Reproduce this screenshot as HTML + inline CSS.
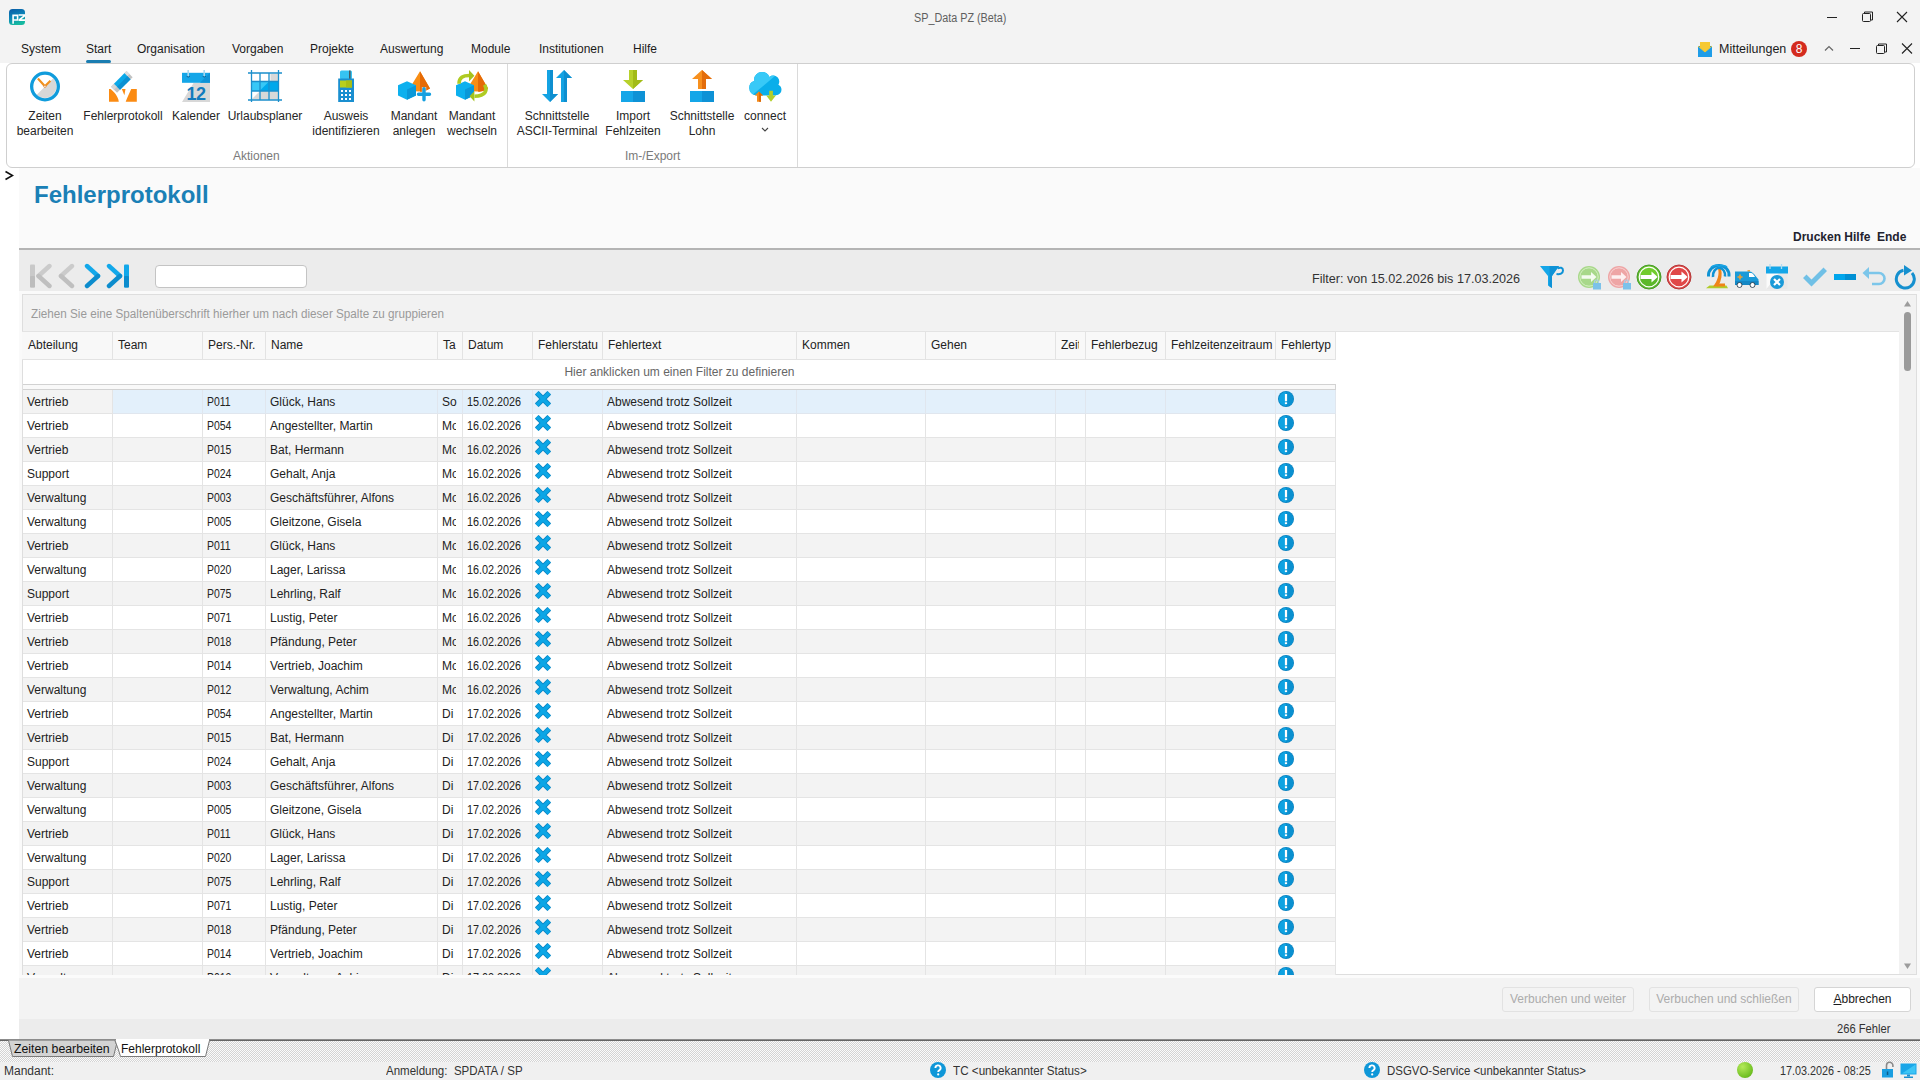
<!DOCTYPE html>
<html><head><meta charset="utf-8">
<style>
*{margin:0;padding:0;box-sizing:border-box}
html,body{width:1920px;height:1080px;overflow:hidden;background:#fff;font-family:"Liberation Sans",sans-serif;font-size:12px;color:#1e1e1e}
.a{position:absolute;white-space:nowrap}
#top{position:absolute;left:0;top:0;width:1920px;height:63px;background:#f3f3f3}
.menu{position:absolute;top:42px;line-height:14px;font-size:12px;color:#1b1b1b}
#ribbon{position:absolute;z-index:2;left:6px;top:63px;width:1909px;height:105px;background:#fff;border:1px solid #cfcfcf;border-radius:6px}
.rb{position:absolute;top:0;text-align:center;line-height:15px;color:#262626}
.rb .ic{position:absolute;top:6px;width:32px;height:32px}
.rb .lb{position:absolute;top:44px;left:-60px;right:-60px;text-align:center;white-space:nowrap}
.gl{position:absolute;top:85px;color:#7a7a7a;line-height:15px}
.sep{position:absolute;top:0;width:1px;height:103px;background:#dadada}

.hdr{position:absolute;left:0;top:37px;width:1314px;height:29px;background:#f8f8f8;border-top:1px solid #e3e3e3;border-bottom:1px solid #e3e3e3}
.hc{position:absolute;top:0;height:27px;border-right:1px solid #e3e3e3;overflow:hidden;padding-left:5px;line-height:27px;color:#222}
.frow{position:absolute;left:1px;top:66px;width:1313px;height:24px;background:#fff;text-align:center;line-height:24px;color:#666}
.fsep{position:absolute;left:1px;top:90px;width:1313px;height:6px;background:#f9f9f9;border:1px solid #d2d2d2;border-left:none}
.row{position:absolute;left:0;width:1314px;height:24px}
.row .c{position:absolute;top:0;height:24px;border-right:1px solid #e4e4e4;border-bottom:1px solid #e4e4e4;padding-left:4px;padding-top:1px;line-height:23px;overflow:hidden;color:#222}
.row.g .c{background:#f3f3f3}
.row.sel .c{background:#e3f0fb;border-color:#e0e6ee}
.row.sel .c.foc{background:#f3f3f3;border-color:#e4e4e4}
.ix,.ii{position:absolute;top:1px}
.ix{left:2px}.ii{left:2px}
.btn{position:absolute;top:987px;height:25px;border:1px solid #e2e2e2;border-radius:3px;background:#f3f3f3;text-align:center;line-height:23px;color:#acacac}
.hatch{background:repeating-conic-gradient(#d4d4d4 0 25%,#fbfbfb 0 50%) 0 0/2px 2px}

.clip{display:inline-block;width:14px;overflow:hidden;vertical-align:top}
.sx{display:inline-block;transform:scaleX(0.9);transform-origin:0 50%}
.sp{display:inline-block;transform:scaleX(0.87);transform-origin:0 50%}
</style></head><body>
<div id="top">
  <!-- app icon -->
  <svg class="a" style="left:9px;top:9px" width="16" height="16" viewBox="0 0 16 16"><defs><linearGradient id="lg" x1="0" y1="0" x2="0.3" y2="1"><stop offset="0" stop-color="#0a5aa6"/><stop offset="0.55" stop-color="#0b86b8"/><stop offset="1" stop-color="#15b9a0"/></linearGradient></defs><rect width="16" height="16" rx="3.5" fill="url(#lg)"/><path d="M4.1 14.8V6.4h4.5v4.6H4.1" fill="none" stroke="#fff" stroke-width="1.6"/><path d="M9.6 6h6.4M16 6.5L10.6 10.6M9.6 11.2H16" fill="none" stroke="#fff" stroke-width="1.7"/></svg>
  <div class="a" style="left:914px;top:11px;line-height:14px;color:#5f5f5f;transform:scaleX(0.9);transform-origin:0 0">SP_Data PZ (Beta)</div>
  <!-- window controls -->
  <svg class="a" style="left:1820px;top:8px" width="96" height="20" viewBox="0 0 96 20">
    <path d="M7 9.5h10" stroke="#222" stroke-width="1"/>
    <rect x="42.5" y="5.5" width="8" height="8" fill="none" stroke="#222" rx="1"/>
    <path d="M44.5 5.5v-1.5h8v8h-1.5" fill="none" stroke="#222"/>
    <path d="M77 4l10 10M87 4l-10 10" stroke="#222" stroke-width="1.1"/>
  </svg>
  <div class="menu a" style="left:21px">System</div>
  <div class="menu a" style="left:86px">Start</div>
  <div class="a" style="left:86px;top:60px;width:25px;height:3px;background:#1a7db1;border-radius:2px"></div>
  <div class="menu a" style="left:137px">Organisation</div>
  <div class="menu a" style="left:232px">Vorgaben</div>
  <div class="menu a" style="left:310px">Projekte</div>
  <div class="menu a" style="left:380px">Auswertung</div>
  <div class="menu a" style="left:471px">Module</div>
  <div class="menu a" style="left:539px">Institutionen</div>
  <div class="menu a" style="left:633px">Hilfe</div>
  <!-- right side -->
  <svg class="a" style="left:1697px;top:40px" width="16" height="18" viewBox="0 0 16 18">
    <rect x="1" y="6" width="14" height="11" fill="#1a8fd6"/>
    <path d="M3 2h10v10H3z" fill="#f6c932"/>
    <path d="M1 6l7 6 7-6v11H1z" fill="#1f9de8"/>
    <path d="M1 6l7 6 7-6" fill="none" stroke="#f6c932" stroke-width="1"/>
  </svg>
  <div class="menu a" style="left:1719px;transform:scaleX(1.04);transform-origin:0 0">Mitteilungen</div>
  <div class="a" style="left:1791px;top:41px;width:16px;height:16px;border-radius:8px;background:#d42b1e;color:#fff;text-align:center;line-height:16px;font-size:12px">8</div>
  <svg class="a" style="left:1820px;top:40px" width="96" height="18" viewBox="0 0 96 18">
    <path d="M5 10.5l4-4 4 4" fill="none" stroke="#666" stroke-width="1.2"/>
    <path d="M30 8.5h10" stroke="#222"/>
    <rect x="56.5" y="5.5" width="8" height="8" fill="none" stroke="#222" rx="1"/>
    <path d="M58.5 5.5v-1.5h8v8h-1.5" fill="none" stroke="#222"/>
    <path d="M82 3.5l10 10M92 3.5l-10 10" stroke="#222" stroke-width="1.1"/>
  </svg>
</div>

<div id="ribbon">
  <!-- page coords: ribbon content is inside #ribbon at left 7 top 64 -->
  <svg class="a" style="left:22px;top:6px" width="32" height="32" viewBox="0 0 32 32">
    <circle cx="16" cy="16.5" r="12" fill="#fff"/>
    <path d="M7.73 24.77A11.7 11.7 0 0 0 24.27 8.23Z" fill="#d8d8d8"/>
    <circle cx="16" cy="16.5" r="13.35" fill="none" stroke="#109cdc" stroke-width="3.3"/>
    <path d="M8.9 8.6L15.9 16.2 21.4 10.8" fill="none" stroke="#f0901e" stroke-width="2.2" stroke-linejoin="round"/>
    <circle cx="15.9" cy="16.4" r="1.1" fill="#fff" stroke="#e08a3a" stroke-width=".8"/>
  </svg>
  <svg class="a" style="left:100px;top:6px" width="32" height="32" viewBox="0 0 32 32">
    <path d="M2 19.1H3.7C7 22 11 26 11.8 31.7H2z" fill="#fb8b12"/>
    <path d="M14.8 19.1H18.5L17.4 25.3z" fill="#fb8b12"/>
    <path d="M24.2 19.1H29.8V31.7H18.7C20.5 27 22.5 23 24.2 19.1z" fill="#fb8b12"/>
    <g transform="translate(15.3 11.4) rotate(-45)">
      <rect x="-11.7" y="-4.3" width="4.2" height="8.6" fill="#c4c4c4"/>
      <rect x="-11.7" y="-4.3" width="4.2" height="4.3" fill="#d6d6d6"/>
      <rect x="-7.5" y="-4.3" width="15" height="8.6" fill="#0aa8e8"/>
      <rect x="-7.5" y="0" width="15" height="4.3" fill="#0c90d2"/>
      <rect x="7.5" y="-4.3" width="2.8" height="8.6" fill="#c2c2c2"/>
      <rect x="7.5" y="-4.3" width="2.8" height="4.3" fill="#dedede"/>
    </g>
  </svg>
  <svg class="a" style="left:174px;top:6px" width="32" height="32" viewBox="0 0 32 32">
    <path d="M1 13h28v19H1z" fill="#d8d8d8"/>
    <path d="M1 13h11.5L1 32z" fill="#fff"/>
    <rect x="1" y="2.8" width="28" height="10" fill="#14a6e8"/>
    <path d="M19 12.8L29 2.8v10z" fill="#0e92d6"/>
    <path d="M7.2 0v6.5M23.2 0v6.5" stroke="#a9d8ef" stroke-width="1.6"/>
    <path d="M5.8 6a1.6 1.6 0 0 0 3 0M21.8 6a1.6 1.6 0 0 0 3 0" fill="none" stroke="#0a5f92" stroke-width="1"/>
    <text x="15" y="29.5" text-anchor="middle" font-family="Liberation Sans" font-weight="bold" font-size="18" fill="#137bbd" letter-spacing="-0.5">12</text>
  </svg>
  <svg class="a" style="left:241px;top:6px" width="34" height="32" viewBox="0 0 34 32">
    <rect x="3.5" y="3" width="27" height="27" fill="#fff"/>
    <path d="M22.5 12V4h7.8z" fill="#d8d8d8" transform="translate(0 0)"/>
    <path d="M21.5 11.5L30 3.5v8z" fill="#d8d8d8"/>
    <rect x="3.5" y="21" width="27" height="8.5" fill="#d8d8d8"/>
    <path d="M3.5 29.5L12 21H3.5z" fill="#fff"/>
    <rect x="3.5" y="11.5" width="27" height="9.5" fill="#00a8ec"/>
    <path d="M3.5 11.5h17.5L11.5 21H3.5z" fill="#37c8f7"/>
    <path d="M0 3h34M0 30h34M3.5 0v32M30.5 0v32M12 3v27M21 3v27M3.5 11.5h27M3.5 21h27" stroke="#1b8fcc" stroke-width="1.3"/>
  </svg>
  <svg class="a" style="left:323px;top:6px" width="32" height="32" viewBox="0 0 32 32">
    <rect x="10" y="0.5" width="12" height="9" rx="1.5" fill="#36c3f2"/>
    <rect x="19" y="0.5" width="1.6" height="9" fill="#455a64"/>
    <rect x="8.2" y="8.5" width="15.8" height="23.5" fill="#1a8fd0"/>
    <rect x="10" y="10.5" width="12" height="7" fill="#b8cf1c"/>
    <rect x="16" y="10.5" width="6" height="7" fill="#a9bf14"/>
    <g fill="#fff"><rect x="11" y="20" width="2" height="2"/><rect x="15" y="20" width="2" height="2"/><rect x="19" y="20" width="2" height="2"/><rect x="11" y="24" width="2" height="2"/><rect x="15" y="24" width="2" height="2"/><rect x="19" y="24" width="2" height="2"/><rect x="11" y="28" width="2" height="2"/><rect x="15" y="28" width="2" height="2"/><rect x="19" y="28" width="2" height="2"/></g>
  </svg>
  <svg class="a" style="left:391px;top:6px" width="34" height="32" viewBox="0 0 34 32">
    <path d="M22 1.2L32 18.6Q27 22 22 21.6L10 21z" fill="#f88d14"/>
    <path d="M22 1.2L32 18.6Q27 22 22 21.6z" fill="#e56a06"/>
    <path d="M0 15.3L9 11.2L18 15.3V25.6L9 29.7L0 25.6z" fill="#0db0ee"/>
    <path d="M9 19.4L18 15.3V25.6L9 29.7z" fill="#0a98d8"/>
    <path d="M19 22h13.5v4.5h-13.5zM23.8 17h4.5v13.5h-4.5z" fill="#fff" opacity=".6"/>
    <path d="M20.5 24.2h11M26 18.7v11" stroke="#16a0e0" stroke-width="3.4" stroke-linecap="round"/>
  </svg>
  <svg class="a" style="left:449px;top:6px" width="34" height="32" viewBox="0 0 34 32">
    <path d="M22 1.2L32 18.6Q27 22 22 21.6L10 21z" fill="#f88d14"/>
    <path d="M22 1.2L32 18.6Q27 22 22 21.6z" fill="#e56a06"/>
    <path d="M0 15.3L9 11.2L18 15.3V25.6L9 29.7L0 25.6z" fill="#0db0ee"/>
    <path d="M9 19.4L18 15.3V25.6L9 29.7z" fill="#0a98d8"/>
    <path d="M3 13.8C3 7.5 7 5.5 13.5 5.5" fill="none" stroke="#afcb22" stroke-width="3.6"/>
    <path d="M13 0L18.4 5.8 13 11.6z" fill="#a6c21c"/>
    <path d="M28.5 14.8C31.5 19.5 30.5 26.2 18.5 26.2" fill="none" stroke="#afcb22" stroke-width="3.6"/>
    <path d="M18.4 21L13.6 26.2 18.4 31.5z" fill="#a6c21c"/>
  </svg>
  <svg class="a" style="left:535px;top:6px" width="32" height="32" viewBox="0 0 32 32">
    <path d="M5 0h6v24h5L8 32 0 24h5z" fill="#14a3e3"/>
    <path d="M8 0h3v24h5L8 32z" fill="#0e8fd0"/>
    <path d="M19 32h6V8h5L22 0l-8 8h5z" fill="#14a3e3"/>
    <path d="M22 32h3V8h5L22 0z" fill="#0e8fd0"/>
  </svg>
  <svg class="a" style="left:614px;top:6px" width="32" height="32" viewBox="0 0 32 32">
    <path d="M8 0h8v10h6l-10 9-10-9h6z" fill="#b7d12b"/>
    <path d="M12 0h4v10h6l-10 9z" fill="#a2bb18"/>
    <rect x="0" y="21" width="24" height="11" fill="#14a6e8"/>
    <rect x="12" y="21" width="12" height="11" fill="#0e92d6"/>
  </svg>
  <svg class="a" style="left:683px;top:6px" width="32" height="32" viewBox="0 0 32 32">
    <path d="M8 19h8V9h6L12 0 2 9h6z" fill="#f7901e"/>
    <path d="M12 19h4V9h6L12 0z" fill="#e36d0b"/>
    <rect x="0" y="21" width="24" height="11" fill="#14a6e8"/>
    <rect x="12" y="21" width="12" height="11" fill="#0e92d6"/>
  </svg>
  <svg class="a" style="left:741px;top:6px" width="34" height="32" viewBox="0 0 34 32">
    <defs><clipPath id="cc"><circle cx="14" cy="10" r="8"/><circle cx="25.3" cy="11.6" r="6"/><circle cx="27.9" cy="19.7" r="5.6"/><circle cx="8.5" cy="18" r="7.3"/><rect x="8" y="12" width="20" height="13.6"/></clipPath></defs>
    <g clip-path="url(#cc)"><rect x="0" y="0" width="34" height="32" fill="#0aaeea"/><path d="M0 0H34L2 27z" fill="#38c9f7"/></g>
    <path d="M6.7 25.6L10.9 21.6 15 25.6H13V31.7H9V25.6z" fill="#f48a1a"/>
    <path d="M10.9 21.6L15 25.6H13V31.7H11z" fill="#dc6c0a"/>
    <path d="M21.2 20.8H24.9V25.6H27.9L23 31.7 18.2 25.6H21.2z" fill="#b3cf2a"/>
  </svg>
  <div class="rb" style="left:38px"><div class="lb" style="top:45px">Zeiten<br>bearbeiten</div></div>
  <div class="rb" style="left:116px"><div class="lb" style="top:45px">Fehlerprotokoll</div></div>
  <div class="rb" style="left:189px"><div class="lb" style="top:45px">Kalender</div></div>
  <div class="rb" style="left:258px"><div class="lb" style="top:45px">Urlaubsplaner</div></div>
  <div class="rb" style="left:339px"><div class="lb" style="top:45px">Ausweis<br>identifizieren</div></div>
  <div class="rb" style="left:407px"><div class="lb" style="top:45px">Mandant<br>anlegen</div></div>
  <div class="rb" style="left:465px"><div class="lb" style="top:45px">Mandant<br>wechseln</div></div>
  <div class="rb" style="left:550px"><div class="lb" style="top:45px">Schnittstelle<br>ASCII-Terminal</div></div>
  <div class="rb" style="left:626px"><div class="lb" style="top:45px">Import<br>Fehlzeiten</div></div>
  <div class="rb" style="left:695px"><div class="lb" style="top:45px">Schnittstelle<br>Lohn</div></div>
  <div class="rb" style="left:758px"><div class="lb" style="top:45px">connect</div></div>
  <svg class="a" style="left:754px;top:63px" width="8" height="5" viewBox="0 0 8 5"><path d="M1 1l3 3 3-3" fill="none" stroke="#444" stroke-width="1.1"/></svg>
  <div class="gl" style="left:226px">Aktionen</div>
  <div class="gl" style="left:618px">Im-/Export</div>
  <div class="sep" style="left:500px"></div>
  <div class="sep" style="left:790px"></div>
</div>

<div class="a" style="left:0;top:63px;width:19px;height:977px;background:#fff"></div>
<svg class="a" style="left:4px;top:170px" width="10" height="11" viewBox="0 0 10 11"><path d="M1.5 1.5L8.5 5.5 1.5 9.5" fill="none" stroke="#111" stroke-width="1.7"/></svg>
<div id="page" class="a" style="left:19px;top:168px;width:1901px;height:872px;background:#fafafa">
  <div class="a" style="left:15px;top:12px;font-size:24px;font-weight:bold;line-height:30px;color:#1a80b6">Fehlerprotokoll</div>
  <div class="a" style="left:1774px;top:62px;font-weight:bold;line-height:14px;color:#22222e">Drucken Hilfe &nbsp;Ende</div>
</div>
<div class="a" style="left:19px;top:248px;width:1901px;height:2px;background:#b4b4b4"></div>
<div class="a" style="left:19px;top:250px;width:1901px;height:41px;background:#ececec"></div>
<!-- nav icons -->
<svg class="a" style="left:28px;top:263px" width="104" height="26" viewBox="0 0 104 26">
  <rect x="2" y="1.5" width="5" height="23" rx="1" fill="#c9c9c9"/>
  <rect x="2" y="13" width="5" height="11.5" rx="1" fill="#bdbdbd"/>
  <g fill="none" stroke-width="4.4" stroke-linecap="round" stroke-linejoin="round">
  <path d="M21.5 3L10.5 13" stroke="#cbcbcb"/><path d="M10.5 13L21.5 23" stroke="#bfbfbf"/>
  <path d="M44 3L33 13" stroke="#cbcbcb"/><path d="M33 13L44 23" stroke="#bfbfbf"/>
  <path d="M59 3L70 13" stroke="#12a8ea"/><path d="M70 13L59 23" stroke="#0c8ccd"/>
  <path d="M81 3L92 13" stroke="#12a8ea"/><path d="M92 13L81 23" stroke="#0c8ccd"/>
  </g>
  <rect x="96" y="1.5" width="5" height="23" rx="1" fill="#12a8ea"/>
  <rect x="96" y="13" width="5" height="11.5" rx="1" fill="#0c8ccd"/>
</svg>
<div class="a" style="left:155px;top:265px;width:152px;height:23px;background:#fff;border:1px solid #c4c4c4;border-radius:4px"></div>
<div class="a" style="left:1312px;top:271px;line-height:16px;font-size:12.6px;color:#333">Filter: von 15.02.2026 bis 17.03.2026</div>
<svg class="a" style="left:1538px;top:264px" width="28" height="26" viewBox="0 0 28 26">
  <path d="M2 2h19l-7 10v12l-4 -2.5V12z" fill="#14a6e8"/>
  <path d="M11.5 2h9.5l-7 10v12l-2.5-1.5z" fill="#0e92d6"/>
  <path d="M19.5 4.5c2.5-1.5 5.5-1 5.5 2s-3 4-6.5 3.5" fill="none" stroke="#0e92d6" stroke-width="2"/>
</svg>
<svg class="a" style="left:1577px;top:265px" width="26" height="25" viewBox="0 0 26 25">
  <circle cx="12" cy="12" r="11" fill="#a8d88a"/>
  <circle cx="12" cy="12" r="9.2" fill="none" stroke="#d6f0c4" stroke-width="1"/>
  <path d="M4.5 10.2h9.5V7l5.5 5-5.5 5v-3.2H4.5z" fill="#f4fbef"/>
  <path d="M17.5 18.5v-1.5a2 2 0 0 1 4 0v1.5" fill="none" stroke="#a9cfe6" stroke-width="1.2"/>
  <rect x="16" y="18" width="8" height="6.5" fill="#7cc2ea"/>
</svg>
<svg class="a" style="left:1607px;top:265px" width="26" height="25" viewBox="0 0 26 25">
  <circle cx="12" cy="12" r="11" fill="#eea5a5"/>
  <circle cx="12" cy="12" r="9.2" fill="none" stroke="#f8d4d4" stroke-width="1"/>
  <path d="M4.5 10.2h9.5V7l5.5 5-5.5 5v-3.2H4.5z" fill="#fdf0f0"/>
  <path d="M17.5 18.5v-1.5a2 2 0 0 1 4 0v1.5" fill="none" stroke="#a9cfe6" stroke-width="1.2"/>
  <rect x="16" y="18" width="8" height="6.5" fill="#7cc2ea"/>
</svg>
<svg class="a" style="left:1636px;top:264px" width="26" height="26" viewBox="0 0 26 26">
  <circle cx="13" cy="13" r="12" fill="#5cb82a"/>
  <path d="M3 11A10 10 0 0 1 23 13" fill="#72cc2e"/>
  <circle cx="13" cy="13" r="12" fill="none" stroke="#4a9a2a" stroke-width="1"/>
  <circle cx="13" cy="13" r="9.8" fill="none" stroke="#ffffff" stroke-width="1.2"/>
  <path d="M4.5 11h11V7.5l6.2 5.5-6.2 5.5V15h-11z" fill="#fff"/>
</svg>
<svg class="a" style="left:1666px;top:264px" width="26" height="26" viewBox="0 0 26 26">
  <circle cx="13" cy="13" r="12" fill="#e04848"/>
  <circle cx="13" cy="13" r="12" fill="none" stroke="#b43a3a" stroke-width="1"/>
  <circle cx="13" cy="13" r="9.8" fill="none" stroke="#ffffff" stroke-width="1.2"/>
  <path d="M4.5 11h11V7.5l6.2 5.5-6.2 5.5V15h-11z" fill="#fff"/>
</svg>
<svg class="a" style="left:1705px;top:264px" width="26" height="25" viewBox="0 0 26 25">
  <path d="M1 24.2L4.5 21.5H21.5L23 24.2z" fill="#b1cc2a"/>
  <path d="M13 4.5C14.5 10 13 16.5 8 22.5h5c3.5-6 4.5-12 3-18z" fill="#ef8419"/>
  <path d="M12 19.5h8v3h-8z" fill="#ef8419"/>
  <path d="M3.5 12.5C3 6 8 1.5 14 1.5S24.5 6 24 12.5" fill="none" stroke="#0f93d4" stroke-width="3"/>
  <path d="M8 13C7.5 8 10.5 4 14.5 3.5M20 12.5C20.5 8 18 4.5 14 3.5" fill="none" stroke="#0f93d4" stroke-width="2.6"/>
  <path d="M6 3C9 1 12 1 14 2.5 16 1 20 1 22 3" fill="none" stroke="#1aa5e6" stroke-width="1.5"/>
</svg>
<svg class="a" style="left:1734px;top:270px" width="26" height="18" viewBox="0 0 26 18">
  <rect x="13.5" y="0" width="2.5" height="1.8" fill="#f5a742"/>
  <path d="M1 1.5h14c3 0 5 2 7 5l2.5 3V15H1z" fill="#1a9ad8"/>
  <path d="M1 11h23.5v4H1z" fill="#1487c4"/>
  <path d="M15 3h2c1.5 0 3 2 4 4h-6z" fill="#fff"/>
  <path d="M6 4.5v5M3.5 7h5" stroke="#f0a030" stroke-width="1.6"/>
  <circle cx="5.5" cy="15" r="2.5" fill="#fff" stroke="#1a3040" stroke-width="0.8"/>
  <circle cx="18.5" cy="15" r="2.5" fill="#fff" stroke="#1a3040" stroke-width="0.8"/>
</svg>
<svg class="a" style="left:1765px;top:264px" width="25" height="26" viewBox="0 0 25 26">
  <rect x="1.5" y="8" width="21" height="17" fill="#e8e8e8"/>
  <path d="M1.5 8h13L1.5 25z" fill="#fbfbfb"/>
  <rect x="1" y="2.5" width="22" height="7" fill="#14a6e8"/>
  <path d="M5 0v5M16.5 0v5" stroke="#b0dbf0" stroke-width="1.3"/>
  <circle cx="12" cy="18" r="7" fill="#1a9ad8"/>
  <path d="M9 15l6 6M15 15l-6 6" stroke="#fff" stroke-width="2.2"/>
</svg>
<svg class="a" style="left:1802px;top:265px" width="26" height="23" viewBox="0 0 26 23">
  <path d="M1 13l3.5-3.5 5 5L21.5 2.5 25 6 9.5 21.5z" fill="#70c0e6"/>
</svg>
<svg class="a" style="left:1833px;top:273px" width="24" height="8" viewBox="0 0 24 8">
  <rect x="1" y="1" width="22" height="6" fill="#00a6ec"/>
  <rect x="12" y="1" width="11" height="6" fill="#0090d4"/>
</svg>
<svg class="a" style="left:1862px;top:265px" width="26" height="23" viewBox="0 0 26 23">
  <path d="M3 8h14a5.5 5.5 0 0 1 0 11H10" fill="none" stroke="#7cc6ea" stroke-width="2.6"/>
  <path d="M0.5 8L7 2v12z" fill="#7cc6ea"/>
</svg>
<svg class="a" style="left:1893px;top:264px" width="24" height="26" viewBox="0 0 24 26">
  <path d="M10.5 6.2A9 9 0 1 0 19 9" fill="none" stroke="#1590cf" stroke-width="3"/>
  <path d="M11 1l8 5.5-8 5z" fill="#1590cf"/>
</svg>

<!-- grid -->
<div id="grid" class="a" style="left:22px;top:294px;width:1895px;height:681px;background:#fff;border:1px solid #dedede">
  <div class="a" style="left:0;top:0;width:1893px;height:36px;background:#f2f2f2"></div><div class="a" style="left:0;top:36px;width:1876px;height:1px;background:#e3e3e3"></div>
  <div class="a" style="left:8px;top:12px;line-height:14px;color:#9a9a9a;transform:scaleX(0.975);transform-origin:0 0">Ziehen Sie eine Spaltenüberschrift hierher um nach dieser Spalte zu gruppieren</div>
  <div class="a" style="left:1876px;top:36px;width:17px;height:643px;background:#f2f2f2"></div>
  <svg class="a" style="left:1880px;top:5px" width="9" height="8" viewBox="0 0 9 8"><path d="M4.5 1L8 6.5H1z" fill="#9c9c9c"/></svg>
  <div class="a" style="left:1881px;top:17px;width:7px;height:59px;border-radius:4px;background:#9a9a9a"></div>
  <svg class="a" style="left:1880px;top:667px" width="9" height="8" viewBox="0 0 9 8"><path d="M1 1.5h7L4.5 7z" fill="#9c9c9c"/></svg>
  <div id="gbody" class="a" style="left:-1px;top:-1px;width:1334px;height:681px;overflow:hidden">
<div class="hdr">
<div class="hc" style="left:1px;width:90px"><span>Abteilung</span></div>
<div class="hc" style="left:91px;width:90px"><span>Team</span></div>
<div class="hc" style="left:181px;width:63px"><span>Pers.-Nr.</span></div>
<div class="hc" style="left:244px;width:172px"><span>Name</span></div>
<div class="hc" style="left:416px;width:25px"><span>Ta</span></div>
<div class="hc" style="left:441px;width:70px"><span>Datum</span></div>
<div class="hc" style="left:511px;width:70px"><span>Fehlerstatu</span></div>
<div class="hc" style="left:581px;width:194px"><span>Fehlertext</span></div>
<div class="hc" style="left:775px;width:129px"><span>Kommen</span></div>
<div class="hc" style="left:904px;width:130px"><span>Gehen</span></div>
<div class="hc" style="left:1034px;width:30px"><span style="display:inline-block;width:18px;overflow:hidden;vertical-align:top">Zeit</span></div>
<div class="hc" style="left:1064px;width:80px"><span>Fehlerbezug</span></div>
<div class="hc" style="left:1144px;width:110px"><span>Fehlzeitenzeitraum</span></div>
<div class="hc" style="left:1254px;width:60px"><span>Fehlertyp</span></div>
</div>
<div class="frow">Hier anklicken um einen Filter zu definieren</div>
<div class="fsep"></div>
<div class="row sel" style="top:96px">
<div class="c foc" style="left:1px;width:90px">Vertrieb</div>
<div class="c" style="left:91px;width:90px"></div>
<div class="c" style="left:181px;width:63px"><span class="sp">P011</span></div>
<div class="c" style="left:244px;width:172px">Glück, Hans</div>
<div class="c" style="left:416px;width:25px">So</div>
<div class="c" style="left:441px;width:70px"><span class="sx">15.02.2026</span></div>
<div class="c" style="left:511px;width:70px"><svg class="ix" width="16" height="16" viewBox="0 0 16 16"><path d="M1.8 1.8L14.2 14.2M14.2 1.8L1.8 14.2" stroke="#0a86c4" stroke-width="5.2"/><path d="M1.8 1.8L14.2 14.2M14.2 1.8L1.8 14.2" stroke="#0ca6e6" stroke-width="3.6"/></svg></div>
<div class="c" style="left:581px;width:194px">Abwesend trotz Sollzeit</div>
<div class="c" style="left:775px;width:129px"></div>
<div class="c" style="left:904px;width:130px"></div>
<div class="c" style="left:1034px;width:30px"></div>
<div class="c" style="left:1064px;width:80px"></div>
<div class="c" style="left:1144px;width:110px"></div>
<div class="c" style="left:1254px;width:60px"><svg class="ii" width="16" height="16" viewBox="0 0 16 16"><circle cx="8" cy="8" r="8" fill="#0a82c0"/><circle cx="8" cy="8" r="7.2" fill="#0ea3e2"/><path d="M8 0.8a7.2 7.2 0 0 1 0 14.4z" fill="#0a90d0"/><rect x="6.9" y="3" width="2.2" height="7.3" fill="#fff"/><rect x="6.9" y="11.3" width="2.2" height="1.8" fill="#fff"/></svg></div>
</div>
<div class="row" style="top:120px">
<div class="c" style="left:1px;width:90px">Vertrieb</div>
<div class="c" style="left:91px;width:90px"></div>
<div class="c" style="left:181px;width:63px"><span class="sp">P054</span></div>
<div class="c" style="left:244px;width:172px">Angestellter, Martin</div>
<div class="c" style="left:416px;width:25px"><span class="clip">Mo</span></div>
<div class="c" style="left:441px;width:70px"><span class="sx">16.02.2026</span></div>
<div class="c" style="left:511px;width:70px"><svg class="ix" width="16" height="16" viewBox="0 0 16 16"><path d="M1.8 1.8L14.2 14.2M14.2 1.8L1.8 14.2" stroke="#0a86c4" stroke-width="5.2"/><path d="M1.8 1.8L14.2 14.2M14.2 1.8L1.8 14.2" stroke="#0ca6e6" stroke-width="3.6"/></svg></div>
<div class="c" style="left:581px;width:194px">Abwesend trotz Sollzeit</div>
<div class="c" style="left:775px;width:129px"></div>
<div class="c" style="left:904px;width:130px"></div>
<div class="c" style="left:1034px;width:30px"></div>
<div class="c" style="left:1064px;width:80px"></div>
<div class="c" style="left:1144px;width:110px"></div>
<div class="c" style="left:1254px;width:60px"><svg class="ii" width="16" height="16" viewBox="0 0 16 16"><circle cx="8" cy="8" r="8" fill="#0a82c0"/><circle cx="8" cy="8" r="7.2" fill="#0ea3e2"/><path d="M8 0.8a7.2 7.2 0 0 1 0 14.4z" fill="#0a90d0"/><rect x="6.9" y="3" width="2.2" height="7.3" fill="#fff"/><rect x="6.9" y="11.3" width="2.2" height="1.8" fill="#fff"/></svg></div>
</div>
<div class="row g" style="top:144px">
<div class="c" style="left:1px;width:90px">Vertrieb</div>
<div class="c" style="left:91px;width:90px"></div>
<div class="c" style="left:181px;width:63px"><span class="sp">P015</span></div>
<div class="c" style="left:244px;width:172px">Bat, Hermann</div>
<div class="c" style="left:416px;width:25px"><span class="clip">Mo</span></div>
<div class="c" style="left:441px;width:70px"><span class="sx">16.02.2026</span></div>
<div class="c" style="left:511px;width:70px"><svg class="ix" width="16" height="16" viewBox="0 0 16 16"><path d="M1.8 1.8L14.2 14.2M14.2 1.8L1.8 14.2" stroke="#0a86c4" stroke-width="5.2"/><path d="M1.8 1.8L14.2 14.2M14.2 1.8L1.8 14.2" stroke="#0ca6e6" stroke-width="3.6"/></svg></div>
<div class="c" style="left:581px;width:194px">Abwesend trotz Sollzeit</div>
<div class="c" style="left:775px;width:129px"></div>
<div class="c" style="left:904px;width:130px"></div>
<div class="c" style="left:1034px;width:30px"></div>
<div class="c" style="left:1064px;width:80px"></div>
<div class="c" style="left:1144px;width:110px"></div>
<div class="c" style="left:1254px;width:60px"><svg class="ii" width="16" height="16" viewBox="0 0 16 16"><circle cx="8" cy="8" r="8" fill="#0a82c0"/><circle cx="8" cy="8" r="7.2" fill="#0ea3e2"/><path d="M8 0.8a7.2 7.2 0 0 1 0 14.4z" fill="#0a90d0"/><rect x="6.9" y="3" width="2.2" height="7.3" fill="#fff"/><rect x="6.9" y="11.3" width="2.2" height="1.8" fill="#fff"/></svg></div>
</div>
<div class="row" style="top:168px">
<div class="c" style="left:1px;width:90px">Support</div>
<div class="c" style="left:91px;width:90px"></div>
<div class="c" style="left:181px;width:63px"><span class="sp">P024</span></div>
<div class="c" style="left:244px;width:172px">Gehalt, Anja</div>
<div class="c" style="left:416px;width:25px"><span class="clip">Mo</span></div>
<div class="c" style="left:441px;width:70px"><span class="sx">16.02.2026</span></div>
<div class="c" style="left:511px;width:70px"><svg class="ix" width="16" height="16" viewBox="0 0 16 16"><path d="M1.8 1.8L14.2 14.2M14.2 1.8L1.8 14.2" stroke="#0a86c4" stroke-width="5.2"/><path d="M1.8 1.8L14.2 14.2M14.2 1.8L1.8 14.2" stroke="#0ca6e6" stroke-width="3.6"/></svg></div>
<div class="c" style="left:581px;width:194px">Abwesend trotz Sollzeit</div>
<div class="c" style="left:775px;width:129px"></div>
<div class="c" style="left:904px;width:130px"></div>
<div class="c" style="left:1034px;width:30px"></div>
<div class="c" style="left:1064px;width:80px"></div>
<div class="c" style="left:1144px;width:110px"></div>
<div class="c" style="left:1254px;width:60px"><svg class="ii" width="16" height="16" viewBox="0 0 16 16"><circle cx="8" cy="8" r="8" fill="#0a82c0"/><circle cx="8" cy="8" r="7.2" fill="#0ea3e2"/><path d="M8 0.8a7.2 7.2 0 0 1 0 14.4z" fill="#0a90d0"/><rect x="6.9" y="3" width="2.2" height="7.3" fill="#fff"/><rect x="6.9" y="11.3" width="2.2" height="1.8" fill="#fff"/></svg></div>
</div>
<div class="row g" style="top:192px">
<div class="c" style="left:1px;width:90px">Verwaltung</div>
<div class="c" style="left:91px;width:90px"></div>
<div class="c" style="left:181px;width:63px"><span class="sp">P003</span></div>
<div class="c" style="left:244px;width:172px">Geschäftsführer, Alfons</div>
<div class="c" style="left:416px;width:25px"><span class="clip">Mo</span></div>
<div class="c" style="left:441px;width:70px"><span class="sx">16.02.2026</span></div>
<div class="c" style="left:511px;width:70px"><svg class="ix" width="16" height="16" viewBox="0 0 16 16"><path d="M1.8 1.8L14.2 14.2M14.2 1.8L1.8 14.2" stroke="#0a86c4" stroke-width="5.2"/><path d="M1.8 1.8L14.2 14.2M14.2 1.8L1.8 14.2" stroke="#0ca6e6" stroke-width="3.6"/></svg></div>
<div class="c" style="left:581px;width:194px">Abwesend trotz Sollzeit</div>
<div class="c" style="left:775px;width:129px"></div>
<div class="c" style="left:904px;width:130px"></div>
<div class="c" style="left:1034px;width:30px"></div>
<div class="c" style="left:1064px;width:80px"></div>
<div class="c" style="left:1144px;width:110px"></div>
<div class="c" style="left:1254px;width:60px"><svg class="ii" width="16" height="16" viewBox="0 0 16 16"><circle cx="8" cy="8" r="8" fill="#0a82c0"/><circle cx="8" cy="8" r="7.2" fill="#0ea3e2"/><path d="M8 0.8a7.2 7.2 0 0 1 0 14.4z" fill="#0a90d0"/><rect x="6.9" y="3" width="2.2" height="7.3" fill="#fff"/><rect x="6.9" y="11.3" width="2.2" height="1.8" fill="#fff"/></svg></div>
</div>
<div class="row" style="top:216px">
<div class="c" style="left:1px;width:90px">Verwaltung</div>
<div class="c" style="left:91px;width:90px"></div>
<div class="c" style="left:181px;width:63px"><span class="sp">P005</span></div>
<div class="c" style="left:244px;width:172px">Gleitzone, Gisela</div>
<div class="c" style="left:416px;width:25px"><span class="clip">Mo</span></div>
<div class="c" style="left:441px;width:70px"><span class="sx">16.02.2026</span></div>
<div class="c" style="left:511px;width:70px"><svg class="ix" width="16" height="16" viewBox="0 0 16 16"><path d="M1.8 1.8L14.2 14.2M14.2 1.8L1.8 14.2" stroke="#0a86c4" stroke-width="5.2"/><path d="M1.8 1.8L14.2 14.2M14.2 1.8L1.8 14.2" stroke="#0ca6e6" stroke-width="3.6"/></svg></div>
<div class="c" style="left:581px;width:194px">Abwesend trotz Sollzeit</div>
<div class="c" style="left:775px;width:129px"></div>
<div class="c" style="left:904px;width:130px"></div>
<div class="c" style="left:1034px;width:30px"></div>
<div class="c" style="left:1064px;width:80px"></div>
<div class="c" style="left:1144px;width:110px"></div>
<div class="c" style="left:1254px;width:60px"><svg class="ii" width="16" height="16" viewBox="0 0 16 16"><circle cx="8" cy="8" r="8" fill="#0a82c0"/><circle cx="8" cy="8" r="7.2" fill="#0ea3e2"/><path d="M8 0.8a7.2 7.2 0 0 1 0 14.4z" fill="#0a90d0"/><rect x="6.9" y="3" width="2.2" height="7.3" fill="#fff"/><rect x="6.9" y="11.3" width="2.2" height="1.8" fill="#fff"/></svg></div>
</div>
<div class="row g" style="top:240px">
<div class="c" style="left:1px;width:90px">Vertrieb</div>
<div class="c" style="left:91px;width:90px"></div>
<div class="c" style="left:181px;width:63px"><span class="sp">P011</span></div>
<div class="c" style="left:244px;width:172px">Glück, Hans</div>
<div class="c" style="left:416px;width:25px"><span class="clip">Mo</span></div>
<div class="c" style="left:441px;width:70px"><span class="sx">16.02.2026</span></div>
<div class="c" style="left:511px;width:70px"><svg class="ix" width="16" height="16" viewBox="0 0 16 16"><path d="M1.8 1.8L14.2 14.2M14.2 1.8L1.8 14.2" stroke="#0a86c4" stroke-width="5.2"/><path d="M1.8 1.8L14.2 14.2M14.2 1.8L1.8 14.2" stroke="#0ca6e6" stroke-width="3.6"/></svg></div>
<div class="c" style="left:581px;width:194px">Abwesend trotz Sollzeit</div>
<div class="c" style="left:775px;width:129px"></div>
<div class="c" style="left:904px;width:130px"></div>
<div class="c" style="left:1034px;width:30px"></div>
<div class="c" style="left:1064px;width:80px"></div>
<div class="c" style="left:1144px;width:110px"></div>
<div class="c" style="left:1254px;width:60px"><svg class="ii" width="16" height="16" viewBox="0 0 16 16"><circle cx="8" cy="8" r="8" fill="#0a82c0"/><circle cx="8" cy="8" r="7.2" fill="#0ea3e2"/><path d="M8 0.8a7.2 7.2 0 0 1 0 14.4z" fill="#0a90d0"/><rect x="6.9" y="3" width="2.2" height="7.3" fill="#fff"/><rect x="6.9" y="11.3" width="2.2" height="1.8" fill="#fff"/></svg></div>
</div>
<div class="row" style="top:264px">
<div class="c" style="left:1px;width:90px">Verwaltung</div>
<div class="c" style="left:91px;width:90px"></div>
<div class="c" style="left:181px;width:63px"><span class="sp">P020</span></div>
<div class="c" style="left:244px;width:172px">Lager, Larissa</div>
<div class="c" style="left:416px;width:25px"><span class="clip">Mo</span></div>
<div class="c" style="left:441px;width:70px"><span class="sx">16.02.2026</span></div>
<div class="c" style="left:511px;width:70px"><svg class="ix" width="16" height="16" viewBox="0 0 16 16"><path d="M1.8 1.8L14.2 14.2M14.2 1.8L1.8 14.2" stroke="#0a86c4" stroke-width="5.2"/><path d="M1.8 1.8L14.2 14.2M14.2 1.8L1.8 14.2" stroke="#0ca6e6" stroke-width="3.6"/></svg></div>
<div class="c" style="left:581px;width:194px">Abwesend trotz Sollzeit</div>
<div class="c" style="left:775px;width:129px"></div>
<div class="c" style="left:904px;width:130px"></div>
<div class="c" style="left:1034px;width:30px"></div>
<div class="c" style="left:1064px;width:80px"></div>
<div class="c" style="left:1144px;width:110px"></div>
<div class="c" style="left:1254px;width:60px"><svg class="ii" width="16" height="16" viewBox="0 0 16 16"><circle cx="8" cy="8" r="8" fill="#0a82c0"/><circle cx="8" cy="8" r="7.2" fill="#0ea3e2"/><path d="M8 0.8a7.2 7.2 0 0 1 0 14.4z" fill="#0a90d0"/><rect x="6.9" y="3" width="2.2" height="7.3" fill="#fff"/><rect x="6.9" y="11.3" width="2.2" height="1.8" fill="#fff"/></svg></div>
</div>
<div class="row g" style="top:288px">
<div class="c" style="left:1px;width:90px">Support</div>
<div class="c" style="left:91px;width:90px"></div>
<div class="c" style="left:181px;width:63px"><span class="sp">P075</span></div>
<div class="c" style="left:244px;width:172px">Lehrling, Ralf</div>
<div class="c" style="left:416px;width:25px"><span class="clip">Mo</span></div>
<div class="c" style="left:441px;width:70px"><span class="sx">16.02.2026</span></div>
<div class="c" style="left:511px;width:70px"><svg class="ix" width="16" height="16" viewBox="0 0 16 16"><path d="M1.8 1.8L14.2 14.2M14.2 1.8L1.8 14.2" stroke="#0a86c4" stroke-width="5.2"/><path d="M1.8 1.8L14.2 14.2M14.2 1.8L1.8 14.2" stroke="#0ca6e6" stroke-width="3.6"/></svg></div>
<div class="c" style="left:581px;width:194px">Abwesend trotz Sollzeit</div>
<div class="c" style="left:775px;width:129px"></div>
<div class="c" style="left:904px;width:130px"></div>
<div class="c" style="left:1034px;width:30px"></div>
<div class="c" style="left:1064px;width:80px"></div>
<div class="c" style="left:1144px;width:110px"></div>
<div class="c" style="left:1254px;width:60px"><svg class="ii" width="16" height="16" viewBox="0 0 16 16"><circle cx="8" cy="8" r="8" fill="#0a82c0"/><circle cx="8" cy="8" r="7.2" fill="#0ea3e2"/><path d="M8 0.8a7.2 7.2 0 0 1 0 14.4z" fill="#0a90d0"/><rect x="6.9" y="3" width="2.2" height="7.3" fill="#fff"/><rect x="6.9" y="11.3" width="2.2" height="1.8" fill="#fff"/></svg></div>
</div>
<div class="row" style="top:312px">
<div class="c" style="left:1px;width:90px">Vertrieb</div>
<div class="c" style="left:91px;width:90px"></div>
<div class="c" style="left:181px;width:63px"><span class="sp">P071</span></div>
<div class="c" style="left:244px;width:172px">Lustig, Peter</div>
<div class="c" style="left:416px;width:25px"><span class="clip">Mo</span></div>
<div class="c" style="left:441px;width:70px"><span class="sx">16.02.2026</span></div>
<div class="c" style="left:511px;width:70px"><svg class="ix" width="16" height="16" viewBox="0 0 16 16"><path d="M1.8 1.8L14.2 14.2M14.2 1.8L1.8 14.2" stroke="#0a86c4" stroke-width="5.2"/><path d="M1.8 1.8L14.2 14.2M14.2 1.8L1.8 14.2" stroke="#0ca6e6" stroke-width="3.6"/></svg></div>
<div class="c" style="left:581px;width:194px">Abwesend trotz Sollzeit</div>
<div class="c" style="left:775px;width:129px"></div>
<div class="c" style="left:904px;width:130px"></div>
<div class="c" style="left:1034px;width:30px"></div>
<div class="c" style="left:1064px;width:80px"></div>
<div class="c" style="left:1144px;width:110px"></div>
<div class="c" style="left:1254px;width:60px"><svg class="ii" width="16" height="16" viewBox="0 0 16 16"><circle cx="8" cy="8" r="8" fill="#0a82c0"/><circle cx="8" cy="8" r="7.2" fill="#0ea3e2"/><path d="M8 0.8a7.2 7.2 0 0 1 0 14.4z" fill="#0a90d0"/><rect x="6.9" y="3" width="2.2" height="7.3" fill="#fff"/><rect x="6.9" y="11.3" width="2.2" height="1.8" fill="#fff"/></svg></div>
</div>
<div class="row g" style="top:336px">
<div class="c" style="left:1px;width:90px">Vertrieb</div>
<div class="c" style="left:91px;width:90px"></div>
<div class="c" style="left:181px;width:63px"><span class="sp">P018</span></div>
<div class="c" style="left:244px;width:172px">Pfändung, Peter</div>
<div class="c" style="left:416px;width:25px"><span class="clip">Mo</span></div>
<div class="c" style="left:441px;width:70px"><span class="sx">16.02.2026</span></div>
<div class="c" style="left:511px;width:70px"><svg class="ix" width="16" height="16" viewBox="0 0 16 16"><path d="M1.8 1.8L14.2 14.2M14.2 1.8L1.8 14.2" stroke="#0a86c4" stroke-width="5.2"/><path d="M1.8 1.8L14.2 14.2M14.2 1.8L1.8 14.2" stroke="#0ca6e6" stroke-width="3.6"/></svg></div>
<div class="c" style="left:581px;width:194px">Abwesend trotz Sollzeit</div>
<div class="c" style="left:775px;width:129px"></div>
<div class="c" style="left:904px;width:130px"></div>
<div class="c" style="left:1034px;width:30px"></div>
<div class="c" style="left:1064px;width:80px"></div>
<div class="c" style="left:1144px;width:110px"></div>
<div class="c" style="left:1254px;width:60px"><svg class="ii" width="16" height="16" viewBox="0 0 16 16"><circle cx="8" cy="8" r="8" fill="#0a82c0"/><circle cx="8" cy="8" r="7.2" fill="#0ea3e2"/><path d="M8 0.8a7.2 7.2 0 0 1 0 14.4z" fill="#0a90d0"/><rect x="6.9" y="3" width="2.2" height="7.3" fill="#fff"/><rect x="6.9" y="11.3" width="2.2" height="1.8" fill="#fff"/></svg></div>
</div>
<div class="row" style="top:360px">
<div class="c" style="left:1px;width:90px">Vertrieb</div>
<div class="c" style="left:91px;width:90px"></div>
<div class="c" style="left:181px;width:63px"><span class="sp">P014</span></div>
<div class="c" style="left:244px;width:172px">Vertrieb, Joachim</div>
<div class="c" style="left:416px;width:25px"><span class="clip">Mo</span></div>
<div class="c" style="left:441px;width:70px"><span class="sx">16.02.2026</span></div>
<div class="c" style="left:511px;width:70px"><svg class="ix" width="16" height="16" viewBox="0 0 16 16"><path d="M1.8 1.8L14.2 14.2M14.2 1.8L1.8 14.2" stroke="#0a86c4" stroke-width="5.2"/><path d="M1.8 1.8L14.2 14.2M14.2 1.8L1.8 14.2" stroke="#0ca6e6" stroke-width="3.6"/></svg></div>
<div class="c" style="left:581px;width:194px">Abwesend trotz Sollzeit</div>
<div class="c" style="left:775px;width:129px"></div>
<div class="c" style="left:904px;width:130px"></div>
<div class="c" style="left:1034px;width:30px"></div>
<div class="c" style="left:1064px;width:80px"></div>
<div class="c" style="left:1144px;width:110px"></div>
<div class="c" style="left:1254px;width:60px"><svg class="ii" width="16" height="16" viewBox="0 0 16 16"><circle cx="8" cy="8" r="8" fill="#0a82c0"/><circle cx="8" cy="8" r="7.2" fill="#0ea3e2"/><path d="M8 0.8a7.2 7.2 0 0 1 0 14.4z" fill="#0a90d0"/><rect x="6.9" y="3" width="2.2" height="7.3" fill="#fff"/><rect x="6.9" y="11.3" width="2.2" height="1.8" fill="#fff"/></svg></div>
</div>
<div class="row g" style="top:384px">
<div class="c" style="left:1px;width:90px">Verwaltung</div>
<div class="c" style="left:91px;width:90px"></div>
<div class="c" style="left:181px;width:63px"><span class="sp">P012</span></div>
<div class="c" style="left:244px;width:172px">Verwaltung, Achim</div>
<div class="c" style="left:416px;width:25px"><span class="clip">Mo</span></div>
<div class="c" style="left:441px;width:70px"><span class="sx">16.02.2026</span></div>
<div class="c" style="left:511px;width:70px"><svg class="ix" width="16" height="16" viewBox="0 0 16 16"><path d="M1.8 1.8L14.2 14.2M14.2 1.8L1.8 14.2" stroke="#0a86c4" stroke-width="5.2"/><path d="M1.8 1.8L14.2 14.2M14.2 1.8L1.8 14.2" stroke="#0ca6e6" stroke-width="3.6"/></svg></div>
<div class="c" style="left:581px;width:194px">Abwesend trotz Sollzeit</div>
<div class="c" style="left:775px;width:129px"></div>
<div class="c" style="left:904px;width:130px"></div>
<div class="c" style="left:1034px;width:30px"></div>
<div class="c" style="left:1064px;width:80px"></div>
<div class="c" style="left:1144px;width:110px"></div>
<div class="c" style="left:1254px;width:60px"><svg class="ii" width="16" height="16" viewBox="0 0 16 16"><circle cx="8" cy="8" r="8" fill="#0a82c0"/><circle cx="8" cy="8" r="7.2" fill="#0ea3e2"/><path d="M8 0.8a7.2 7.2 0 0 1 0 14.4z" fill="#0a90d0"/><rect x="6.9" y="3" width="2.2" height="7.3" fill="#fff"/><rect x="6.9" y="11.3" width="2.2" height="1.8" fill="#fff"/></svg></div>
</div>
<div class="row" style="top:408px">
<div class="c" style="left:1px;width:90px">Vertrieb</div>
<div class="c" style="left:91px;width:90px"></div>
<div class="c" style="left:181px;width:63px"><span class="sp">P054</span></div>
<div class="c" style="left:244px;width:172px">Angestellter, Martin</div>
<div class="c" style="left:416px;width:25px">Di</div>
<div class="c" style="left:441px;width:70px"><span class="sx">17.02.2026</span></div>
<div class="c" style="left:511px;width:70px"><svg class="ix" width="16" height="16" viewBox="0 0 16 16"><path d="M1.8 1.8L14.2 14.2M14.2 1.8L1.8 14.2" stroke="#0a86c4" stroke-width="5.2"/><path d="M1.8 1.8L14.2 14.2M14.2 1.8L1.8 14.2" stroke="#0ca6e6" stroke-width="3.6"/></svg></div>
<div class="c" style="left:581px;width:194px">Abwesend trotz Sollzeit</div>
<div class="c" style="left:775px;width:129px"></div>
<div class="c" style="left:904px;width:130px"></div>
<div class="c" style="left:1034px;width:30px"></div>
<div class="c" style="left:1064px;width:80px"></div>
<div class="c" style="left:1144px;width:110px"></div>
<div class="c" style="left:1254px;width:60px"><svg class="ii" width="16" height="16" viewBox="0 0 16 16"><circle cx="8" cy="8" r="8" fill="#0a82c0"/><circle cx="8" cy="8" r="7.2" fill="#0ea3e2"/><path d="M8 0.8a7.2 7.2 0 0 1 0 14.4z" fill="#0a90d0"/><rect x="6.9" y="3" width="2.2" height="7.3" fill="#fff"/><rect x="6.9" y="11.3" width="2.2" height="1.8" fill="#fff"/></svg></div>
</div>
<div class="row g" style="top:432px">
<div class="c" style="left:1px;width:90px">Vertrieb</div>
<div class="c" style="left:91px;width:90px"></div>
<div class="c" style="left:181px;width:63px"><span class="sp">P015</span></div>
<div class="c" style="left:244px;width:172px">Bat, Hermann</div>
<div class="c" style="left:416px;width:25px">Di</div>
<div class="c" style="left:441px;width:70px"><span class="sx">17.02.2026</span></div>
<div class="c" style="left:511px;width:70px"><svg class="ix" width="16" height="16" viewBox="0 0 16 16"><path d="M1.8 1.8L14.2 14.2M14.2 1.8L1.8 14.2" stroke="#0a86c4" stroke-width="5.2"/><path d="M1.8 1.8L14.2 14.2M14.2 1.8L1.8 14.2" stroke="#0ca6e6" stroke-width="3.6"/></svg></div>
<div class="c" style="left:581px;width:194px">Abwesend trotz Sollzeit</div>
<div class="c" style="left:775px;width:129px"></div>
<div class="c" style="left:904px;width:130px"></div>
<div class="c" style="left:1034px;width:30px"></div>
<div class="c" style="left:1064px;width:80px"></div>
<div class="c" style="left:1144px;width:110px"></div>
<div class="c" style="left:1254px;width:60px"><svg class="ii" width="16" height="16" viewBox="0 0 16 16"><circle cx="8" cy="8" r="8" fill="#0a82c0"/><circle cx="8" cy="8" r="7.2" fill="#0ea3e2"/><path d="M8 0.8a7.2 7.2 0 0 1 0 14.4z" fill="#0a90d0"/><rect x="6.9" y="3" width="2.2" height="7.3" fill="#fff"/><rect x="6.9" y="11.3" width="2.2" height="1.8" fill="#fff"/></svg></div>
</div>
<div class="row" style="top:456px">
<div class="c" style="left:1px;width:90px">Support</div>
<div class="c" style="left:91px;width:90px"></div>
<div class="c" style="left:181px;width:63px"><span class="sp">P024</span></div>
<div class="c" style="left:244px;width:172px">Gehalt, Anja</div>
<div class="c" style="left:416px;width:25px">Di</div>
<div class="c" style="left:441px;width:70px"><span class="sx">17.02.2026</span></div>
<div class="c" style="left:511px;width:70px"><svg class="ix" width="16" height="16" viewBox="0 0 16 16"><path d="M1.8 1.8L14.2 14.2M14.2 1.8L1.8 14.2" stroke="#0a86c4" stroke-width="5.2"/><path d="M1.8 1.8L14.2 14.2M14.2 1.8L1.8 14.2" stroke="#0ca6e6" stroke-width="3.6"/></svg></div>
<div class="c" style="left:581px;width:194px">Abwesend trotz Sollzeit</div>
<div class="c" style="left:775px;width:129px"></div>
<div class="c" style="left:904px;width:130px"></div>
<div class="c" style="left:1034px;width:30px"></div>
<div class="c" style="left:1064px;width:80px"></div>
<div class="c" style="left:1144px;width:110px"></div>
<div class="c" style="left:1254px;width:60px"><svg class="ii" width="16" height="16" viewBox="0 0 16 16"><circle cx="8" cy="8" r="8" fill="#0a82c0"/><circle cx="8" cy="8" r="7.2" fill="#0ea3e2"/><path d="M8 0.8a7.2 7.2 0 0 1 0 14.4z" fill="#0a90d0"/><rect x="6.9" y="3" width="2.2" height="7.3" fill="#fff"/><rect x="6.9" y="11.3" width="2.2" height="1.8" fill="#fff"/></svg></div>
</div>
<div class="row g" style="top:480px">
<div class="c" style="left:1px;width:90px">Verwaltung</div>
<div class="c" style="left:91px;width:90px"></div>
<div class="c" style="left:181px;width:63px"><span class="sp">P003</span></div>
<div class="c" style="left:244px;width:172px">Geschäftsführer, Alfons</div>
<div class="c" style="left:416px;width:25px">Di</div>
<div class="c" style="left:441px;width:70px"><span class="sx">17.02.2026</span></div>
<div class="c" style="left:511px;width:70px"><svg class="ix" width="16" height="16" viewBox="0 0 16 16"><path d="M1.8 1.8L14.2 14.2M14.2 1.8L1.8 14.2" stroke="#0a86c4" stroke-width="5.2"/><path d="M1.8 1.8L14.2 14.2M14.2 1.8L1.8 14.2" stroke="#0ca6e6" stroke-width="3.6"/></svg></div>
<div class="c" style="left:581px;width:194px">Abwesend trotz Sollzeit</div>
<div class="c" style="left:775px;width:129px"></div>
<div class="c" style="left:904px;width:130px"></div>
<div class="c" style="left:1034px;width:30px"></div>
<div class="c" style="left:1064px;width:80px"></div>
<div class="c" style="left:1144px;width:110px"></div>
<div class="c" style="left:1254px;width:60px"><svg class="ii" width="16" height="16" viewBox="0 0 16 16"><circle cx="8" cy="8" r="8" fill="#0a82c0"/><circle cx="8" cy="8" r="7.2" fill="#0ea3e2"/><path d="M8 0.8a7.2 7.2 0 0 1 0 14.4z" fill="#0a90d0"/><rect x="6.9" y="3" width="2.2" height="7.3" fill="#fff"/><rect x="6.9" y="11.3" width="2.2" height="1.8" fill="#fff"/></svg></div>
</div>
<div class="row" style="top:504px">
<div class="c" style="left:1px;width:90px">Verwaltung</div>
<div class="c" style="left:91px;width:90px"></div>
<div class="c" style="left:181px;width:63px"><span class="sp">P005</span></div>
<div class="c" style="left:244px;width:172px">Gleitzone, Gisela</div>
<div class="c" style="left:416px;width:25px">Di</div>
<div class="c" style="left:441px;width:70px"><span class="sx">17.02.2026</span></div>
<div class="c" style="left:511px;width:70px"><svg class="ix" width="16" height="16" viewBox="0 0 16 16"><path d="M1.8 1.8L14.2 14.2M14.2 1.8L1.8 14.2" stroke="#0a86c4" stroke-width="5.2"/><path d="M1.8 1.8L14.2 14.2M14.2 1.8L1.8 14.2" stroke="#0ca6e6" stroke-width="3.6"/></svg></div>
<div class="c" style="left:581px;width:194px">Abwesend trotz Sollzeit</div>
<div class="c" style="left:775px;width:129px"></div>
<div class="c" style="left:904px;width:130px"></div>
<div class="c" style="left:1034px;width:30px"></div>
<div class="c" style="left:1064px;width:80px"></div>
<div class="c" style="left:1144px;width:110px"></div>
<div class="c" style="left:1254px;width:60px"><svg class="ii" width="16" height="16" viewBox="0 0 16 16"><circle cx="8" cy="8" r="8" fill="#0a82c0"/><circle cx="8" cy="8" r="7.2" fill="#0ea3e2"/><path d="M8 0.8a7.2 7.2 0 0 1 0 14.4z" fill="#0a90d0"/><rect x="6.9" y="3" width="2.2" height="7.3" fill="#fff"/><rect x="6.9" y="11.3" width="2.2" height="1.8" fill="#fff"/></svg></div>
</div>
<div class="row g" style="top:528px">
<div class="c" style="left:1px;width:90px">Vertrieb</div>
<div class="c" style="left:91px;width:90px"></div>
<div class="c" style="left:181px;width:63px"><span class="sp">P011</span></div>
<div class="c" style="left:244px;width:172px">Glück, Hans</div>
<div class="c" style="left:416px;width:25px">Di</div>
<div class="c" style="left:441px;width:70px"><span class="sx">17.02.2026</span></div>
<div class="c" style="left:511px;width:70px"><svg class="ix" width="16" height="16" viewBox="0 0 16 16"><path d="M1.8 1.8L14.2 14.2M14.2 1.8L1.8 14.2" stroke="#0a86c4" stroke-width="5.2"/><path d="M1.8 1.8L14.2 14.2M14.2 1.8L1.8 14.2" stroke="#0ca6e6" stroke-width="3.6"/></svg></div>
<div class="c" style="left:581px;width:194px">Abwesend trotz Sollzeit</div>
<div class="c" style="left:775px;width:129px"></div>
<div class="c" style="left:904px;width:130px"></div>
<div class="c" style="left:1034px;width:30px"></div>
<div class="c" style="left:1064px;width:80px"></div>
<div class="c" style="left:1144px;width:110px"></div>
<div class="c" style="left:1254px;width:60px"><svg class="ii" width="16" height="16" viewBox="0 0 16 16"><circle cx="8" cy="8" r="8" fill="#0a82c0"/><circle cx="8" cy="8" r="7.2" fill="#0ea3e2"/><path d="M8 0.8a7.2 7.2 0 0 1 0 14.4z" fill="#0a90d0"/><rect x="6.9" y="3" width="2.2" height="7.3" fill="#fff"/><rect x="6.9" y="11.3" width="2.2" height="1.8" fill="#fff"/></svg></div>
</div>
<div class="row" style="top:552px">
<div class="c" style="left:1px;width:90px">Verwaltung</div>
<div class="c" style="left:91px;width:90px"></div>
<div class="c" style="left:181px;width:63px"><span class="sp">P020</span></div>
<div class="c" style="left:244px;width:172px">Lager, Larissa</div>
<div class="c" style="left:416px;width:25px">Di</div>
<div class="c" style="left:441px;width:70px"><span class="sx">17.02.2026</span></div>
<div class="c" style="left:511px;width:70px"><svg class="ix" width="16" height="16" viewBox="0 0 16 16"><path d="M1.8 1.8L14.2 14.2M14.2 1.8L1.8 14.2" stroke="#0a86c4" stroke-width="5.2"/><path d="M1.8 1.8L14.2 14.2M14.2 1.8L1.8 14.2" stroke="#0ca6e6" stroke-width="3.6"/></svg></div>
<div class="c" style="left:581px;width:194px">Abwesend trotz Sollzeit</div>
<div class="c" style="left:775px;width:129px"></div>
<div class="c" style="left:904px;width:130px"></div>
<div class="c" style="left:1034px;width:30px"></div>
<div class="c" style="left:1064px;width:80px"></div>
<div class="c" style="left:1144px;width:110px"></div>
<div class="c" style="left:1254px;width:60px"><svg class="ii" width="16" height="16" viewBox="0 0 16 16"><circle cx="8" cy="8" r="8" fill="#0a82c0"/><circle cx="8" cy="8" r="7.2" fill="#0ea3e2"/><path d="M8 0.8a7.2 7.2 0 0 1 0 14.4z" fill="#0a90d0"/><rect x="6.9" y="3" width="2.2" height="7.3" fill="#fff"/><rect x="6.9" y="11.3" width="2.2" height="1.8" fill="#fff"/></svg></div>
</div>
<div class="row g" style="top:576px">
<div class="c" style="left:1px;width:90px">Support</div>
<div class="c" style="left:91px;width:90px"></div>
<div class="c" style="left:181px;width:63px"><span class="sp">P075</span></div>
<div class="c" style="left:244px;width:172px">Lehrling, Ralf</div>
<div class="c" style="left:416px;width:25px">Di</div>
<div class="c" style="left:441px;width:70px"><span class="sx">17.02.2026</span></div>
<div class="c" style="left:511px;width:70px"><svg class="ix" width="16" height="16" viewBox="0 0 16 16"><path d="M1.8 1.8L14.2 14.2M14.2 1.8L1.8 14.2" stroke="#0a86c4" stroke-width="5.2"/><path d="M1.8 1.8L14.2 14.2M14.2 1.8L1.8 14.2" stroke="#0ca6e6" stroke-width="3.6"/></svg></div>
<div class="c" style="left:581px;width:194px">Abwesend trotz Sollzeit</div>
<div class="c" style="left:775px;width:129px"></div>
<div class="c" style="left:904px;width:130px"></div>
<div class="c" style="left:1034px;width:30px"></div>
<div class="c" style="left:1064px;width:80px"></div>
<div class="c" style="left:1144px;width:110px"></div>
<div class="c" style="left:1254px;width:60px"><svg class="ii" width="16" height="16" viewBox="0 0 16 16"><circle cx="8" cy="8" r="8" fill="#0a82c0"/><circle cx="8" cy="8" r="7.2" fill="#0ea3e2"/><path d="M8 0.8a7.2 7.2 0 0 1 0 14.4z" fill="#0a90d0"/><rect x="6.9" y="3" width="2.2" height="7.3" fill="#fff"/><rect x="6.9" y="11.3" width="2.2" height="1.8" fill="#fff"/></svg></div>
</div>
<div class="row" style="top:600px">
<div class="c" style="left:1px;width:90px">Vertrieb</div>
<div class="c" style="left:91px;width:90px"></div>
<div class="c" style="left:181px;width:63px"><span class="sp">P071</span></div>
<div class="c" style="left:244px;width:172px">Lustig, Peter</div>
<div class="c" style="left:416px;width:25px">Di</div>
<div class="c" style="left:441px;width:70px"><span class="sx">17.02.2026</span></div>
<div class="c" style="left:511px;width:70px"><svg class="ix" width="16" height="16" viewBox="0 0 16 16"><path d="M1.8 1.8L14.2 14.2M14.2 1.8L1.8 14.2" stroke="#0a86c4" stroke-width="5.2"/><path d="M1.8 1.8L14.2 14.2M14.2 1.8L1.8 14.2" stroke="#0ca6e6" stroke-width="3.6"/></svg></div>
<div class="c" style="left:581px;width:194px">Abwesend trotz Sollzeit</div>
<div class="c" style="left:775px;width:129px"></div>
<div class="c" style="left:904px;width:130px"></div>
<div class="c" style="left:1034px;width:30px"></div>
<div class="c" style="left:1064px;width:80px"></div>
<div class="c" style="left:1144px;width:110px"></div>
<div class="c" style="left:1254px;width:60px"><svg class="ii" width="16" height="16" viewBox="0 0 16 16"><circle cx="8" cy="8" r="8" fill="#0a82c0"/><circle cx="8" cy="8" r="7.2" fill="#0ea3e2"/><path d="M8 0.8a7.2 7.2 0 0 1 0 14.4z" fill="#0a90d0"/><rect x="6.9" y="3" width="2.2" height="7.3" fill="#fff"/><rect x="6.9" y="11.3" width="2.2" height="1.8" fill="#fff"/></svg></div>
</div>
<div class="row g" style="top:624px">
<div class="c" style="left:1px;width:90px">Vertrieb</div>
<div class="c" style="left:91px;width:90px"></div>
<div class="c" style="left:181px;width:63px"><span class="sp">P018</span></div>
<div class="c" style="left:244px;width:172px">Pfändung, Peter</div>
<div class="c" style="left:416px;width:25px">Di</div>
<div class="c" style="left:441px;width:70px"><span class="sx">17.02.2026</span></div>
<div class="c" style="left:511px;width:70px"><svg class="ix" width="16" height="16" viewBox="0 0 16 16"><path d="M1.8 1.8L14.2 14.2M14.2 1.8L1.8 14.2" stroke="#0a86c4" stroke-width="5.2"/><path d="M1.8 1.8L14.2 14.2M14.2 1.8L1.8 14.2" stroke="#0ca6e6" stroke-width="3.6"/></svg></div>
<div class="c" style="left:581px;width:194px">Abwesend trotz Sollzeit</div>
<div class="c" style="left:775px;width:129px"></div>
<div class="c" style="left:904px;width:130px"></div>
<div class="c" style="left:1034px;width:30px"></div>
<div class="c" style="left:1064px;width:80px"></div>
<div class="c" style="left:1144px;width:110px"></div>
<div class="c" style="left:1254px;width:60px"><svg class="ii" width="16" height="16" viewBox="0 0 16 16"><circle cx="8" cy="8" r="8" fill="#0a82c0"/><circle cx="8" cy="8" r="7.2" fill="#0ea3e2"/><path d="M8 0.8a7.2 7.2 0 0 1 0 14.4z" fill="#0a90d0"/><rect x="6.9" y="3" width="2.2" height="7.3" fill="#fff"/><rect x="6.9" y="11.3" width="2.2" height="1.8" fill="#fff"/></svg></div>
</div>
<div class="row" style="top:648px">
<div class="c" style="left:1px;width:90px">Vertrieb</div>
<div class="c" style="left:91px;width:90px"></div>
<div class="c" style="left:181px;width:63px"><span class="sp">P014</span></div>
<div class="c" style="left:244px;width:172px">Vertrieb, Joachim</div>
<div class="c" style="left:416px;width:25px">Di</div>
<div class="c" style="left:441px;width:70px"><span class="sx">17.02.2026</span></div>
<div class="c" style="left:511px;width:70px"><svg class="ix" width="16" height="16" viewBox="0 0 16 16"><path d="M1.8 1.8L14.2 14.2M14.2 1.8L1.8 14.2" stroke="#0a86c4" stroke-width="5.2"/><path d="M1.8 1.8L14.2 14.2M14.2 1.8L1.8 14.2" stroke="#0ca6e6" stroke-width="3.6"/></svg></div>
<div class="c" style="left:581px;width:194px">Abwesend trotz Sollzeit</div>
<div class="c" style="left:775px;width:129px"></div>
<div class="c" style="left:904px;width:130px"></div>
<div class="c" style="left:1034px;width:30px"></div>
<div class="c" style="left:1064px;width:80px"></div>
<div class="c" style="left:1144px;width:110px"></div>
<div class="c" style="left:1254px;width:60px"><svg class="ii" width="16" height="16" viewBox="0 0 16 16"><circle cx="8" cy="8" r="8" fill="#0a82c0"/><circle cx="8" cy="8" r="7.2" fill="#0ea3e2"/><path d="M8 0.8a7.2 7.2 0 0 1 0 14.4z" fill="#0a90d0"/><rect x="6.9" y="3" width="2.2" height="7.3" fill="#fff"/><rect x="6.9" y="11.3" width="2.2" height="1.8" fill="#fff"/></svg></div>
</div>
<div class="row g" style="top:672px">
<div class="c" style="left:1px;width:90px">Verwaltung</div>
<div class="c" style="left:91px;width:90px"></div>
<div class="c" style="left:181px;width:63px"><span class="sp">P012</span></div>
<div class="c" style="left:244px;width:172px">Verwaltung, Achim</div>
<div class="c" style="left:416px;width:25px">Di</div>
<div class="c" style="left:441px;width:70px"><span class="sx">17.02.2026</span></div>
<div class="c" style="left:511px;width:70px"><svg class="ix" width="16" height="16" viewBox="0 0 16 16"><path d="M1.8 1.8L14.2 14.2M14.2 1.8L1.8 14.2" stroke="#0a86c4" stroke-width="5.2"/><path d="M1.8 1.8L14.2 14.2M14.2 1.8L1.8 14.2" stroke="#0ca6e6" stroke-width="3.6"/></svg></div>
<div class="c" style="left:581px;width:194px">Abwesend trotz Sollzeit</div>
<div class="c" style="left:775px;width:129px"></div>
<div class="c" style="left:904px;width:130px"></div>
<div class="c" style="left:1034px;width:30px"></div>
<div class="c" style="left:1064px;width:80px"></div>
<div class="c" style="left:1144px;width:110px"></div>
<div class="c" style="left:1254px;width:60px"><svg class="ii" width="16" height="16" viewBox="0 0 16 16"><circle cx="8" cy="8" r="8" fill="#0a82c0"/><circle cx="8" cy="8" r="7.2" fill="#0ea3e2"/><path d="M8 0.8a7.2 7.2 0 0 1 0 14.4z" fill="#0a90d0"/><rect x="6.9" y="3" width="2.2" height="7.3" fill="#fff"/><rect x="6.9" y="11.3" width="2.2" height="1.8" fill="#fff"/></svg></div>
</div>
  </div>
</div>
<!-- buttons -->
<div class="a" style="left:19px;top:975px;width:1901px;height:3px;background:#fbfbfb"></div><div class="a" style="left:19px;top:978px;width:1901px;height:41px;background:#f3f3f3"></div>
<div class="a" style="left:19px;top:1019px;width:1901px;height:21px;background:#ececec"></div>
<div class="btn dis" style="left:1502px;width:132px">Verbuchen und weiter</div>
<div class="btn dis" style="left:1649px;width:150px">Verbuchen und schließen</div>
<div class="btn" style="left:1814px;width:97px;background:#fff;border-color:#d5d5d5;color:#1b1b1b"><u>A</u>bbrechen</div>
<div class="a" style="left:1837px;top:1022px;line-height:14px;color:#333;transform:scaleX(0.93);transform-origin:0 0">266 Fehler</div>
<!-- tabs & status -->
<div class="a hatch" style="left:0;top:1040px;width:1920px;height:22px"></div>
<div class="a" style="left:0;top:1039px;width:1920px;height:1px;background:#8c8c8c"></div><div class="a" style="left:0;top:1040px;width:1920px;height:1px;background:#666"></div>
<svg class="a" style="left:0;top:1039px" width="220" height="20" viewBox="0 0 220 20">
  <path d="M8.5 1.5L12.5 17.5H113.5L116.5 5.5 115 1.5" fill="#d3d3d3" stroke="#7a7a7a" stroke-width="1"/>
  <path d="M115 1.5L118.5 11 120.5 17.5H205.5L209.5 1.5" fill="#fff" stroke="#7a7a7a" stroke-width="1"/>
  <rect x="116" y="0" width="93" height="2" fill="#fff"/>
</svg>
<div class="a" style="left:14px;top:1042px;line-height:14px;color:#111;font-size:12.3px">Zeiten bearbeiten</div>
<div class="a" style="left:121px;top:1042px;line-height:14px;color:#111">Fehlerprotokoll</div>
<div class="a" style="left:0;top:1062px;width:1920px;height:18px;background:#f0f0f0"></div>
<div class="a" style="left:4px;top:1064px;line-height:14px;color:#333">Mandant:</div>
<div class="a" style="left:386px;top:1064px;line-height:14px;color:#333;transform:scaleX(0.96);transform-origin:0 0">Anmeldung:&nbsp; SPDATA / SP</div>
<svg class="a" style="left:930px;top:1062px" width="16" height="16" viewBox="0 0 16 16"><circle cx="8" cy="8" r="8" fill="#0f97d8"/><path d="M5.4 6a2.6 2.6 0 1 1 3.8 2.3c-.8.4-1 .8-1 1.6" fill="none" stroke="#fff" stroke-width="1.9"/><circle cx="8.2" cy="12.4" r="1.1" fill="#fff"/></svg>
<div class="a" style="left:953px;top:1064px;line-height:14px;color:#333;transform:scaleX(0.973);transform-origin:0 0">TC &lt;unbekannter Status&gt;</div>
<svg class="a" style="left:1364px;top:1062px" width="16" height="16" viewBox="0 0 16 16"><circle cx="8" cy="8" r="8" fill="#0f97d8"/><path d="M5.4 6a2.6 2.6 0 1 1 3.8 2.3c-.8.4-1 .8-1 1.6" fill="none" stroke="#fff" stroke-width="1.9"/><circle cx="8.2" cy="12.4" r="1.1" fill="#fff"/></svg>
<div class="a" style="left:1387px;top:1064px;line-height:14px;color:#333;transform:scaleX(0.953);transform-origin:0 0">DSGVO-Service &lt;unbekannter Status&gt;</div>
<div class="a" style="left:1737px;top:1062px;width:16px;height:16px;border-radius:8px;background:radial-gradient(circle at 35% 30%,#b4ea5a,#6fbf22 70%,#4f9a12)"></div>
<div class="a" style="left:1780px;top:1064px;line-height:14px;color:#333;transform:scaleX(0.9);transform-origin:0 0">17.03.2026 - 08:25</div>
<svg class="a" style="left:1881px;top:1061px" width="14" height="17" viewBox="0 0 14 17">
  <path d="M5.5 8V4.5a3.2 3.2 0 0 1 6.4 0V6" fill="none" stroke="#8a8a8a" stroke-width="1.6"/>
  <rect x="1" y="8" width="11" height="8.5" fill="#1a9ee0"/>
  <rect x="5.8" y="10.5" width="1.5" height="3.5" fill="#0c5d8c"/>
</svg>
<svg class="a" style="left:1900px;top:1063px" width="17" height="15" viewBox="0 0 17 15">
  <rect x="0.5" y="0.5" width="16" height="11" fill="#1aa6e8"/>
  <path d="M2 10.5L15.5 1.5v9z" fill="#3cc4f5"/>
  <rect x="7" y="11.5" width="3" height="2" fill="#1a8fd0"/>
  <rect x="4" y="13.5" width="9" height="1.5" fill="#1a8fd0"/>
</svg>

</body></html>
